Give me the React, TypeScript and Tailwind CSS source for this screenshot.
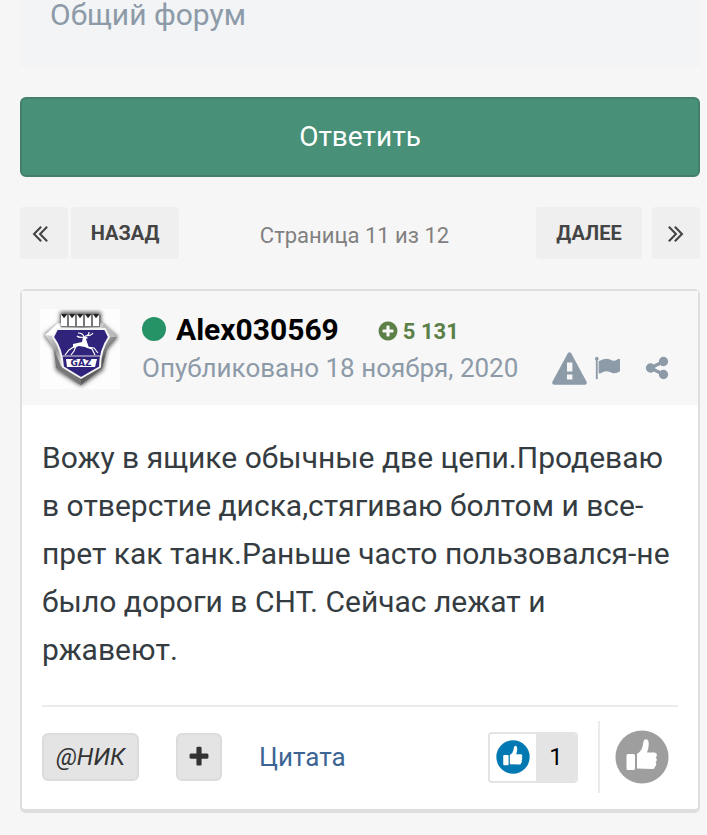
import type { ReactNode } from 'react';

const icons = {
  angles:
    'M1011 1376q0 13-10 23l-50 50q-10 10-23 10t-23-10l-466-466q-10-10-10-23t10-23l466-466q10-10 23-10t23 10l50 50q10 10 10 23t-10 23l-393 393 393 393q10 10 10 23zm384 0q0 13-10 23l-50 50q-10 10-23 10t-23-10l-466-466q-10-10-10-23t10-23l466-466q10-10 23-10t23 10l50 50q10 10 10 23t-10 23l-393 393 393 393q10 10 10 23z',
  plus: 'M1600 736v192q0 40-28 68t-68 28h-416v416q0 40-28 68t-68 28h-192q-40 0-68-28t-28-68v-416h-416q-40 0-68-28t-28-68v-192q0-40 28-68t68-28h416v-416q0-40 28-68t68-28h192q40 0 68 28t28 68v416h416q40 0 68 28t28 68z',
  plusCircle:
    'M1344 960v-128q0-26-19-45t-45-19h-256v-256q0-26-19-45t-45-19h-128q-26 0-45 19t-19 45v256h-256q-26 0-45 19t-19 45v128q0 26 19 45t45 19h256v256q0 26 19 45t45 19h128q26 0 45-19t19-45v-256h256q26 0 45-19t19-45zm320-64q0 209-103 385.5t-279.5 279.5-385.5 103-385.5-103-279.5-279.5-103-385.5 103-385.5 279.5-279.5 385.5-103 385.5 103 279.5 279.5 103 385.5z',
  flag: 'M320 256q0 72-64 110v1266q0 13-9.5 22.5t-22.5 9.5h-64q-13 0-22.5-9.5t-9.5-22.5v-1266q-64-38-64-110 0-53 37.5-90.5t90.5-37.5 90.5 37.5 37.5 90.5zm1472 64v763q0 25-12.5 38.5t-39.5 27.5q-215 116-369 116-61 0-123.5-22t-108.5-48-115.5-48-142.5-22q-192 0-464 146-17 9-33 9-26 0-45-19t-19-45v-742q0-32 31-55 21-14 79-43 236-120 421-120 107 0 200 29t219 88q38 19 88 19 54 0 117.5-21t110-47 88-47 54.5-21q26 0 45 19t19 45z',
  share:
    'M1344 1024q133 0 226.5 93.5t93.5 226.5-93.5 226.5-226.5 93.5-226.5-93.5-93.5-226.5q0-12 2-34l-360-180q-92 86-218 86-133 0-226.5-93.5t-93.5-226.5 93.5-226.5 226.5-93.5q126 0 218 86l360-180q-2-22-2-34 0-133 93.5-226.5t226.5-93.5 226.5 93.5 93.5 226.5-93.5 226.5-226.5 93.5q-126 0-218-86l-360 180q2 22 2 34t-2 34l360 180q92-86 218-86z',
};

function Icon({ name, className }: { name: keyof typeof icons; className: string }) {
  return (
    <svg viewBox="0 0 1792 1792" fill="currentColor" aria-hidden="true" className={className}>
      <path d={icons[name]} />
    </svg>
  );
}

function WarningIcon() {
  return (
    <svg viewBox="0 0 35 33" fill="currentColor" aria-hidden="true" className="h-[33px] w-[35px]">
      <path
        fillRule="evenodd"
        d="M15.8 1.2q1.700-2 3.400 0L34.600 29.800q.8 2.600-1.800 3H2.200q-2.600-.4-1.800-3ZM15 10.500v9h5.400v-9ZM15 22.500v5h5.400v-5Z"
      />
    </svg>
  );
}

function ThumbIcon({ className }: { className: string }) {
  return (
    <svg viewBox="0 0 54 54" aria-hidden="true" className={className}>
      <circle cx="27" cy="27" r="26.5" fill="currentColor" />
      <path
        fill="#fff"
        d="M13 24h5.500q1.500 0 1.500 1.500v13q0 1.500-1.500 1.500H13q-1.500 0-1.500-1.500v-13Q11.500 24 13 24ZM22 38.500V24q5-3 6-9.500.3-5 2.500-5.200 3-.3 3.200 4.200.2 4.500-1.700 9h7.500q2.700.3 2.400 3-.2 1.200-1.200 2 1.300 1 1 2.700-.2 1.500-1.200 2 1 1 .7 2.500-.3 1.400-1.400 1.800.7 2.500-2.600 2.500Z"
      />
    </svg>
  );
}

function Avatar() {
  return (
    <svg viewBox="0 0 80 80" role="img" aria-label="GAZ" className="size-20 shrink-0 bg-[#fdfdfd]">
      <defs>
        <linearGradient id="chrome" x1="0" y1="0" x2="1" y2="1">
          <stop offset="0" stopColor="#ffffff" />
          <stop offset="0.3" stopColor="#999999" />
          <stop offset="0.45" stopColor="#dddddd" />
          <stop offset="0.7" stopColor="#555555" />
          <stop offset="1" stopColor="#999999" />
        </linearGradient>
        <filter id="glow" x="-20%" y="-20%" width="140%" height="140%">
          <feGaussianBlur stdDeviation="2" />
        </filter>
      </defs>
      <path d="M20 3h41v11l17 14-11 13-4 20-22 16-25-16-2-21L4 26l16-12Z" fill="#555" filter="url(#glow)" />
      <path d="M18 14h46l13 14-10 11-5 20-21 17-25-17-2-19L5 26Z" fill="url(#chrome)" />
      <path d="m5 26 13-12 3 5-6 8Z" fill="#fff" />
      <path d="m77 28-13-14-2 5 6 9Z" fill="#bbb" />
      <path d="m14 40 2 19 25 17v-5L21 57Z" fill="#777" />
      <path d="M20 6h41l-1 12H21Z" fill="#777" />
      <path
        d="M21 17V5l3 4 3-3v11Zm8 0V5l3 4 3-3v11Zm8 0V5l3 4 3-3v11Zm8 0V5l3 4 3-3v11Zm8 0V5l3 4 3-3v11Z"
        fill="#fff"
      />
      <path d="m21 5 3 4 3-4Zm8 0 3 4 3-4Zm8 0 3 4 3-4Zm8 0 3 4 3-4Zm8 0 3 4 3-4Z" fill="#222" />
      <path
        d="M17 20h48l4 8q-9 13-9 30L41 69 23 58Q22 40 13 28Z"
        fill="#30237c"
        stroke="#f4f4f4"
        strokeWidth="2"
        strokeLinejoin="round"
      />
      <path d="M22 47h38" stroke="#ddd" strokeWidth="1" />
      <path
        d="M44 28q-1-4-6-4m6 4q-5 1-7-1m8 0q4 0 4-4m-4 4q6 0 8-3M35 37l-6 4-4 5m11-9-2 5-3 4m15-8 6 2 3 6m-8-8 7 1 4 5"
        fill="none"
        stroke="#fff"
        strokeWidth="1.2"
      />
      <path d="m33 35 9-2 1-5 2-1 3 2-2 1 2 6 1 3-4-1-6-1-6 2Z" fill="#fff" />
      <path d="M26 50h31l-2 8H27Z" fill="#fff" />
      <text
        x="41"
        y="57"
        textAnchor="middle"
        className="fill-[#30237c] font-['DejaVu_Sans',sans-serif] text-[9px] font-bold"
      >
        GAZ
      </text>
    </svg>
  );
}

function PageLink({ label, children, className }: { label?: string; children: ReactNode; className: string }) {
  return (
    <a
      href="#"
      aria-label={label}
      className={`flex h-[52px] items-center justify-center rounded bg-[#efefef] text-xl font-bold text-[#444] ${className}`}
    >
      {children}
    </a>
  );
}

export default function App() {
  return (
    <div className="min-h-screen bg-[#f6f6f6] pr-[7px] pb-6 pl-5 font-[Roboto,sans-serif]">
      <div className="h-[67px] bg-[#f2f4f6] px-[30px]">
        <a href="#" className="block text-[30px] leading-[30px] text-[#8d9aa8]">
          Общий форум
        </a>
      </div>

      <button className="mt-[30px] h-20 w-full rounded-md border-2 border-[#428069] bg-[#489078] text-[28px] text-white">
        Ответить
      </button>

      <nav className="mt-[30px] flex items-center">
        <PageLink label="Первая страница" className="w-12 pr-2 pb-px">
          <Icon name="angles" className="size-7" />
        </PageLink>
        <PageLink className="ml-[3px] w-[108px]">НАЗАД</PageLink>
        <span className="flex-1 pt-1 pr-[6px] text-center text-[22px] text-[#808080]">Страница 11 из 12</span>
        <PageLink className="mr-[10px] w-[106px]">ДАЛЕЕ</PageLink>
        <PageLink label="Последняя страница" className="w-12 pb-px">
          <Icon name="angles" className="size-7 -scale-x-100" />
        </PageLink>
      </nav>

      <article className="mt-[30px] rounded-md border-2 border-b-4 border-[#dedede] bg-white">
        <header className="flex h-[114px] items-center bg-[#f7f7f7] px-[18px] pt-[2px]">
          <Avatar />
          <div className="ml-[22px] min-w-0 flex-1">
            <div className="flex h-[38px] items-center">
              <span className="size-6 rounded-full bg-[#269367]" />
              <a href="#" className="ml-[10px] text-[30px] font-bold text-black">
                Alex030569
              </a>
              <span className="ml-[38px] flex items-center gap-1 pt-1 text-[22px] font-bold text-[#5d7f48]">
                <Icon name="plusCircle" className="size-[22px]" />5 131
              </span>
            </div>
            <div className="flex h-10 items-center text-[#8d9aa8]">
              <time dateTime="2020-11-18" className="flex-1 text-[26px] whitespace-nowrap">
                Опубликовано 18 ноября, 2020
              </time>
              <button aria-label="Предупреждение">
                <WarningIcon />
              </button>
              <button aria-label="Пожаловаться" className="ml-[7px]">
                <Icon name="flag" className="size-[26px]" />
              </button>
              <button aria-label="Поделиться" className="mr-[10px] ml-6">
                <Icon name="share" className="size-[26px]" />
              </button>
            </div>
          </div>
        </header>

        <p className="px-5 pt-[29px] pb-[31px] text-[30px] leading-[48px] text-[#353c41]">
          Вожу в ящике обычные две цепи.Продеваю в отверстие диска,стягиваю болтом и все-прет как танк.Раньше часто
          пользовался-не было дороги в СНТ. Сейчас лежат и ржавеют.
        </p>

        <footer className="mx-5 flex items-center border-t-2 border-[#ebebeb] pt-[14px] pb-4">
          <button className="h-12 w-[97px] rounded-md border-2 border-[#dcdcdc] bg-[#e4e4e4] text-2xl text-[#333] italic">
            @НИК
          </button>
          <button
            aria-label="Мультицитата"
            className="ml-[37px] flex h-12 w-[46px] items-center justify-center rounded-md border-2 border-[#dcdcdc] bg-[#e4e4e4] text-[#333]"
          >
            <Icon name="plus" className="size-6" />
          </button>
          <a href="#" className="ml-[37px] text-[26px] text-[#3d6594]">
            Цитата
          </a>
          <button className="ml-auto flex h-[51px] w-[90px] overflow-hidden rounded border-2 border-[#e4e4e4] text-2xl text-black">
            <span className="flex h-full flex-1 items-center justify-center">
              <ThumbIcon className="size-[34px] text-[#0079b2]" />
            </span>
            <span className="flex h-full w-10 items-center justify-center bg-[#e4e4e4]">1</span>
          </button>
          <div className="ml-5 flex h-[72px] items-center border-l-2 border-[#ebebeb] pr-[9px] pl-[15px]">
            <button aria-label="Нравится">
              <ThumbIcon className="size-[54px] text-[#9e9e9e]" />
            </button>
          </div>
        </footer>
      </article>
    </div>
  );
}
